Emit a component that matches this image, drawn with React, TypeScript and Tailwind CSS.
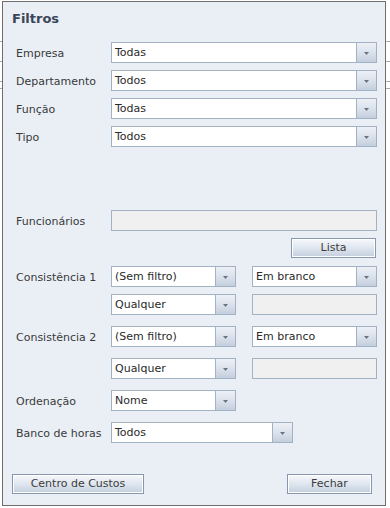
import React from 'react';

const font = { fontFamily: '"DejaVu Sans", Verdana, sans-serif' };

function Arrow() {
    return (
        <div className="w-[20px] h-full border-l border-[#a3b1c4] bg-gradient-to-b from-[#edf1f6] via-[#dbe2ec] to-[#c4cfdd] flex items-center justify-center">
            <svg width="5" height="3" viewBox="0 0 5 3" className="mt-[1px]">
                <path d="M0 0 H5 L2.5 3 Z" fill="#6b7382" />
            </svg>
        </div>
    );
}

function Select({ text, w }: { text: string; w: string }) {
    return (
        <div className={`${w} h-[21px] border border-[#a3b1c4] bg-white flex items-stretch`}>
            <div className="flex-1 pl-[3px] text-[11px] leading-[20px] text-[#2a2a2a]">{text}</div>
            <Arrow />
        </div>
    );
}

function Field({ w }: { w: string }) {
    return <div className={`${w} h-[21px] border border-[#a3b1c4] bg-[#f0f0f0]`} />;
}

function Btn({ label, w }: { label: string; w: string }) {
    return (
        <div className={`${w} h-[20px] border border-[#8697ae] bg-gradient-to-b from-[#f6f8fb] via-[#dfe6ef] to-[#c3cedd] shadow-[inset_0_0_0_1px_#ffffff] flex items-center justify-center text-[11px] text-[#3c3c3c]`}>
            {label}
        </div>
    );
}

function Row({ label, children, mt }: { label: string; children: React.ReactNode; mt: string }) {
    return (
        <div className={`flex items-center h-[21px] ${mt}`}>
            <div className="w-[95px] pt-[3px] text-[11px] text-[#3a3a3a]">{label}</div>
            {children}
        </div>
    );
}

export default function App() {
    // linhas da tabela atrás do diálogo
    const lines = [41, 61, 81, 88];

    return (
        <div className="relative w-[390px] h-[508px] bg-white overflow-hidden" style={font}>
            {lines.map((y) => (
                <div key={y} className="absolute left-0 right-0 h-px bg-[#a8a8a8]" style={{ top: y }} />
            ))}

            <div className="relative ml-[2px] mt-[1px] w-[384px] h-[505px] border border-[#6e6e6e] bg-[#eaeff6] pl-[13px] pr-[8px]">
                <div className="pt-[9px] leading-[16px] text-[13px] font-bold text-[#3b4658] -ml-[4px]">Filtros</div>

                <Row label="Empresa" mt="mt-[15px]"><Select text="Todas" w="w-[266px]" /></Row>
                <Row label="Departamento" mt="mt-[7px]"><Select text="Todos" w="w-[266px]" /></Row>
                <Row label="Função" mt="mt-[7px]"><Select text="Todas" w="w-[266px]" /></Row>
                <Row label="Tipo" mt="mt-[7px]"><Select text="Todos" w="w-[266px]" /></Row>

                <Row label="Funcionários" mt="mt-[63px]"><Field w="w-[266px]" /></Row>
                <div className="flex justify-end mt-[7px] pr-[1px]">
                    <Btn label="Lista" w="w-[85px]" />
                </div>

                <Row label="Consistência 1" mt="mt-[8px]">
                    <Select text="(Sem filtro)" w="w-[125px]" />
                    <div className="w-[16px]" />
                    <Select text="Em branco" w="w-[125px]" />
                </Row>
                <Row label="" mt="mt-[7px]">
                    <Select text="Qualquer" w="w-[125px]" />
                    <div className="w-[16px]" />
                    <Field w="w-[125px]" />
                </Row>

                <Row label="Consistência 2" mt="mt-[11px]">
                    <Select text="(Sem filtro)" w="w-[125px]" />
                    <div className="w-[16px]" />
                    <Select text="Em branco" w="w-[125px]" />
                </Row>
                <Row label="" mt="mt-[11px]">
                    <Select text="Qualquer" w="w-[125px]" />
                    <div className="w-[16px]" />
                    <Field w="w-[125px]" />
                </Row>

                <Row label="Ordenação" mt="mt-[11px]"><Select text="Nome" w="w-[125px]" /></Row>
                <Row label="Banco de horas" mt="mt-[11px]"><Select text="Todos" w="w-[182px]" /></Row>

                <div className="flex justify-between mt-[31px] -ml-[4px] pr-[5px]">
                    <Btn label="Centro de Custos" w="w-[132px]" />
                    <Btn label="Fechar" w="w-[85px]" />
                </div>
            </div>
        </div>
    );
}
